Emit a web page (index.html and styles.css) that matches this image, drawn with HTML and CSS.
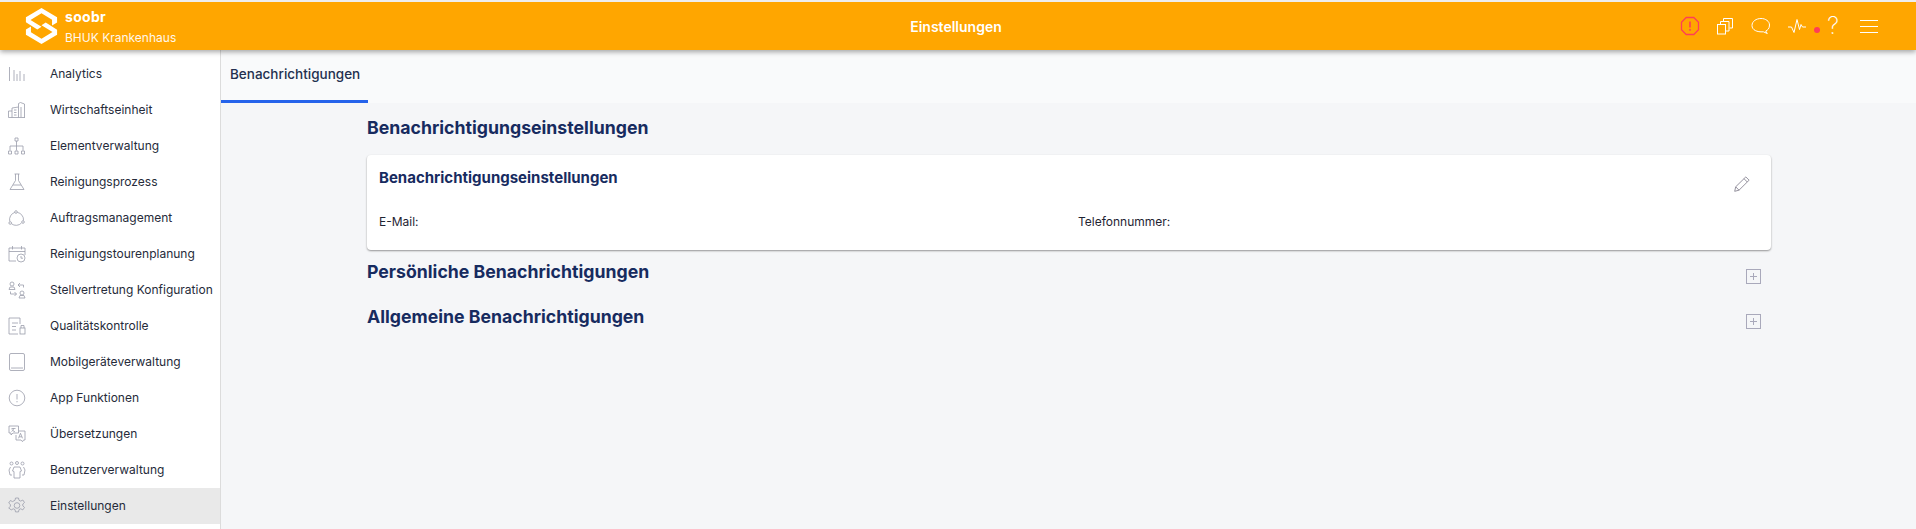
FILE: index.html
```html
<!DOCTYPE html>
<html lang="de">
<head>
<meta charset="utf-8">
<title>Einstellungen</title>
<link rel="stylesheet" href="styles.css">
</head>
<body>
<header class="topbar">
  <div class="brand">
    <svg class="logo" viewBox="0 0 36 36" width="33" height="36" preserveAspectRatio="none">
      <path fill="#fff" fill-rule="evenodd" d="M18 0 35 9.200V14.500L29.500 17.500 29.500 11.800 18 5.200 6 12 18 18.800 13.400 21.500 1 14.300V9.200ZM35 21.700V26.800L18 36 1 26.800V21.500L6.500 18.500V24.200L18 30.800 30 24 18 17.200 22.600 14.500Z"/>
    </svg>
    <div class="brand-text">
      <div class="brand-name">soobr</div>
      <div class="brand-org">BHUK Krankenhaus</div>
    </div>
  </div>
  <div class="page-title">Einstellungen</div>
  <div class="actions">
    <svg class="icon alert" viewBox="0 0 20 20" width="20" height="20"><path d="M6.200 1.500h7.600l4.700 4.700v7.600l-4.700 4.700H6.200l-4.700-4.700V6.200Z" fill="none" stroke="#ff3d57" stroke-width="1.300"/><path d="M10 5.500v6" stroke="#ff3d57" stroke-width="1.600"/><path d="M10 13v1.700" stroke="#ff3d57" stroke-width="1.600"/></svg>
    <svg class="icon copy" viewBox="0 0 18 18" width="18" height="18"><g fill="none" stroke="#fff" stroke-width="1"><rect x="1.500" y="7.500" width="8" height="9.500"/><path d="M4.500 7V4.500h8.500V14H10"/><path d="M7.500 4V1.500h9V11H13.500"/></g></svg>
    <svg class="icon chat" viewBox="0 0 20 18" width="20" height="18"><path d="M10 1.500c4.700 0 8.500 2.800 8.500 6.500s-2 5.300-3.800 6l1.600 2.500-4-1.700C6 15.300 1 13 1 8.500 1 4.300 5.300 1.500 10 1.500Z" fill="none" stroke="#fff" stroke-width="1"/></svg>
    <div class="pulse-group">
      <svg viewBox="0 0 18 16" width="18" height="16"><path d="M0 9h3.500L6 14.500 9 1.500l2.500 10L13 6.500 14.500 9H18" fill="none" stroke="#fff" stroke-width="1"/></svg>
      <span class="dot"></span>
    </div>
    <span class="question">?</span>
    <div class="burger"><span></span><span></span><span></span></div>
  </div>
</header>
<div class="body-row">
  <nav class="sidebar">
    <a class="nav-item"><svg class="nav-icon" viewBox="0 0 18 18"><path d="M1.500 2v14M6 5v11M9 9v7M12 6v10M16 9v7"/></svg><span>Analytics</span></a>
    <a class="nav-item"><svg class="nav-icon" viewBox="0 0 18 18"><path d="M.5 16.500h16.500M10.500 6V2.500l2-1 4 1.500v13.500M4 16.500V7l6.500-1v10.500M.5 16.500V10H4M6 9h2.500M6 11.500h2.500M6 14h2.500M13 6v10"/></svg><span>Wirtschaftseinheit</span></a>
    <a class="nav-item"><svg class="nav-icon" viewBox="0 0 18 18"><path d="M7 1h3v3H7zM8.500 4v9.500M2 9h13M2 9v4.500M15 9v4.500M.5 14h3v3h-3zM7 14h3v3H7zM13.500 14h3v3h-3z"/></svg><span>Elementverwaltung</span></a>
    <a class="nav-item"><svg class="nav-icon" viewBox="0 0 18 18"><path d="M6.500 1h5M7.500 1v6.500L2 16.500h14L10.500 7.500V1M5 12h8"/></svg><span>Reinigungsprozess</span></a>
    <a class="nav-item"><svg class="nav-icon" viewBox="0 0 18 18"><path d="M6.800 3.400A7.500 7.500 0 0 0 1.800 12.500M9.300 3.400A7.500 7.500 0 0 1 15.500 11.500M3.500 14.800A7.500 7.500 0 0 0 13.500 14"/><circle cx="8" cy="3" r="1.300"/><circle cx="2.200" cy="14" r="1.300"/><circle cx="15" cy="13" r="1.300"/></svg><span>Auftragsmanagement</span></a>
    <a class="nav-item"><svg class="nav-icon" viewBox="0 0 18 18"><path d="M8 16H1V3h16v7M1 6.500h16M4.500 1v3.500M13.500 1v3.500"/><circle cx="13" cy="13" r="4"/><path d="M13 11v2.200h2"/></svg><span>Reinigungstourenplanung</span></a>
    <a class="nav-item"><svg class="nav-icon" viewBox="0 0 18 18"><circle cx="4" cy="3" r="2"/><path d="M1 8.500 2 6h4l1 2.500zM10 4h5.500v2.500M10 4l2-2M10 4l2 2"/><circle cx="14" cy="12" r="2"/><path d="M11 17l1-2.500h4l1 2.500zM8.500 13H2.500v-2.500M8.500 13l-2-2M8.500 13l-2 2"/></svg><span>Stellvertretung Konfiguration</span></a>
    <a class="nav-item"><svg class="nav-icon" viewBox="0 0 18 18"><path d="M12 7V1H1v16h9M4 6h6M4 9.500h4M4 13h4"/><rect x="12" y="11" width="5" height="6"/><path d="M13 11V8.500h3V11"/></svg><span>Qualitätskontrolle</span></a>
    <a class="nav-item"><svg class="nav-icon" viewBox="0 0 18 18"><rect x="1.500" y=".5" width="15" height="17" rx="1.500"/><path d="M3 15h12"/></svg><span>Mobilgeräteverwaltung</span></a>
    <a class="nav-item"><svg class="nav-icon" viewBox="0 0 18 18"><circle cx="9" cy="9" r="7.800"/><path d="M9 5v5.500M9 12v1.300"/></svg><span>App Funktionen</span></a>
    <a class="nav-item"><svg class="nav-icon" viewBox="0 0 18 18"><path d="M1 1h9.500v7H5l-2 2V8H1zM3.500 3.500h4M5.500 3.500c0 1.500-.8 2.500-2 3M4 4.500c.5 1 1.800 2 3 2.200M10.500 6H17v9h-1.500l-1 1.700L13 15H8V10"/><path d="M10.500 13.300l2-5 2 5M11.200 11.800h2.600"/></svg><span>Übersetzungen</span></a>
    <a class="nav-item"><svg class="nav-icon" viewBox="0 0 18 18"><circle cx="3.500" cy="2.500" r="1.500"/><circle cx="9" cy="2" r="1.500"/><circle cx="14.500" cy="2.500" r="1.500"/><path d="M6 6h6l1.500 4-1.500.5V17H6v-6.500L4.500 10ZM2.500 6 1 9l1 5h2M15.500 6 17 9l-1 5h-2"/></svg><span>Benutzerverwaltung</span></a>
    <a class="nav-item active"><svg class="nav-icon" viewBox="0 0 18 18"><path d="M7.500 1h3l.5 2.300 1.700.8 2.100-1.100 1.700 2.500-1.700 1.500v1.900l1.700 1.500-1.700 2.500-2.100-1.100-1.700.8-.5 2.300h-3l-.5-2.300-1.700-.8-2.100 1.100L.7 10.900l1.700-1.500V7.500L.7 6l1.700-2.500 2.100 1.100L7 3.300Z"/><circle cx="9" cy="8.500" r="2.800"/></svg><span>Einstellungen</span></a>
  </nav>
  <main class="main">
    <div class="tabs"><div class="tab">Benachrichtigungen</div></div>
    <div class="content">
      <h2 class="section-title first">Benachrichtigungseinstellungen</h2>
      <section class="card">
        <div class="card-head">
          <h3 class="card-title">Benachrichtigungseinstellungen</h3>
          <svg class="edit" viewBox="0 0 16 16" width="16" height="16"><path d="M.7 15.300l1-4.500L11.800.9 15.100 4.200 5 14.200ZM1.700 10.800l3.300 3.400M10 2.700l3.300 3.300" fill="none" stroke="#8a8794" stroke-width=".9"/></svg>
        </div>
        <div class="fields">
          <div class="field">E-Mail:</div>
          <div class="field">Telefonnummer:</div>
        </div>
      </section>
      <div class="section-row tall">
        <h2 class="section-title">Persönliche Benachrichtigungen</h2>
        <span class="plus"></span>
      </div>
      <div class="section-row">
        <h2 class="section-title">Allgemeine Benachrichtigungen</h2>
        <span class="plus"></span>
      </div>
    </div>
  </main>
</div>
</body>
</html>
```
FILE: styles.css
```css
* { box-sizing: border-box; }
html, body { height: 100%; }
body {
  margin: 0;
  height: 529px;
  overflow: hidden;
  font-family: Inter, "Noto Sans", sans-serif;
  background: #f5f6f8;
  color: #1f2433;
  display: flex;
  flex-direction: column;
  border-top: 2px solid #eeeeee;
}
.topbar {
  height: 48px;
  flex: none;
  background: #ffa600;
  color: #fff;
  display: flex;
  align-items: center;
  position: relative;
  z-index: 2;
  box-shadow: 0 2px 5px rgba(0, 0, 0, .35);
}
.brand { display: flex; align-items: center; width: 600px; padding-left: 25px; gap: 7px; }
.logo { flex: none; }
.brand-text { padding-top: 2px; }
.brand-name { font-size: 14px; font-weight: 700; line-height: 20px; letter-spacing: .3px; }
.brand-org { font-size: 12px; line-height: 20px; margin-top: 1px; opacity: .92; }
.page-title { flex: 1; text-align: center; font-size: 14px; font-weight: 600; padding-right: 4px; }
.actions { width: 600px; display: flex; align-items: center; justify-content: flex-end; padding-right: 38px; }
.icon { flex: none; display: block; }
.alert { margin-right: 16px; }
.copy { margin-right: 17px; }
.chat { margin-right: 17px; }
.pulse-group { display: flex; align-items: center; gap: 8px; }
.dot { width: 6px; height: 6px; border-radius: 50%; background: #ff3d57; margin-top: 8px; }
.question { font-size: 24px; font-weight: 200; width: 24px; text-align: center; margin: 0 15px 0 1px; line-height: 24px; }
.burger { width: 18px; display: flex; flex-direction: column; gap: 5px; }
.burger span { display: block; height: 1px; background: #fff; }
.body-row { flex: 1; display: flex; min-height: 0; }
.sidebar {
  width: 221px;
  flex: none;
  background: #fff;
  border-right: 1px solid #dcdcdc;
  padding-top: 6px;
}
.nav-item {
  height: 36px;
  display: flex;
  align-items: center;
  padding-left: 8px;
  font-size: 12px;
  line-height: 16px;
  color: #262b3a;
}
.nav-item.active { background: #e9e9e9; }
.nav-icon {
  width: 18px;
  height: 18px;
  flex: none;
  margin-right: 24px;
  fill: none;
  stroke: #9a9dab;
  stroke-width: .8;
}
.main { flex: 1; min-width: 0; display: flex; flex-direction: column; }
.tabs { height: 53px; flex: none; background: #f9fafb; display: flex; }
.tab {
  width: 147px;
  height: 53px;
  padding: 14px 0 0 9px;
  font-size: 13.500px;
  font-weight: 500;
  line-height: 20px;
  color: #23304f;
  border-bottom: 3px solid #2563eb;
}
.content { width: 1404px; margin-left: 146px; }
.section-title { margin: 0; font-size: 17.700px; font-weight: 700; line-height: 28px; color: #172b5f; }
.section-title.first { padding-top: 11px; height: 52px; }
.card {
  height: 95px;
  background: #fff;
  border-radius: 4px;
  box-shadow: 0 1px 2px rgba(0, 0, 0, .4);
  padding: 13px 12px 0;
}
.card-head { display: flex; justify-content: space-between; height: 44px; }
.card-title { margin: 0; font-size: 15px; font-weight: 700; line-height: 20px; color: #172b5f; }
.edit { margin: 8px 9px 0 0; }
.fields { display: grid; grid-template-columns: 699px 1fr; }
.field { font-size: 12px; line-height: 20px; }
.section-row { height: 44px; display: flex; justify-content: space-between; align-items: flex-start; padding-top: 8px; }
.section-row.tall { height: 45px; }
.plus {
  width: 15px;
  height: 15px;
  margin: 11px 10px 0 0;
  border: 1px solid #a9a9bb;
  background:
    linear-gradient(#a9a9bb, #a9a9bb) center / 7px 1px no-repeat,
    linear-gradient(#a9a9bb, #a9a9bb) center / 1px 7px no-repeat;
}
```
